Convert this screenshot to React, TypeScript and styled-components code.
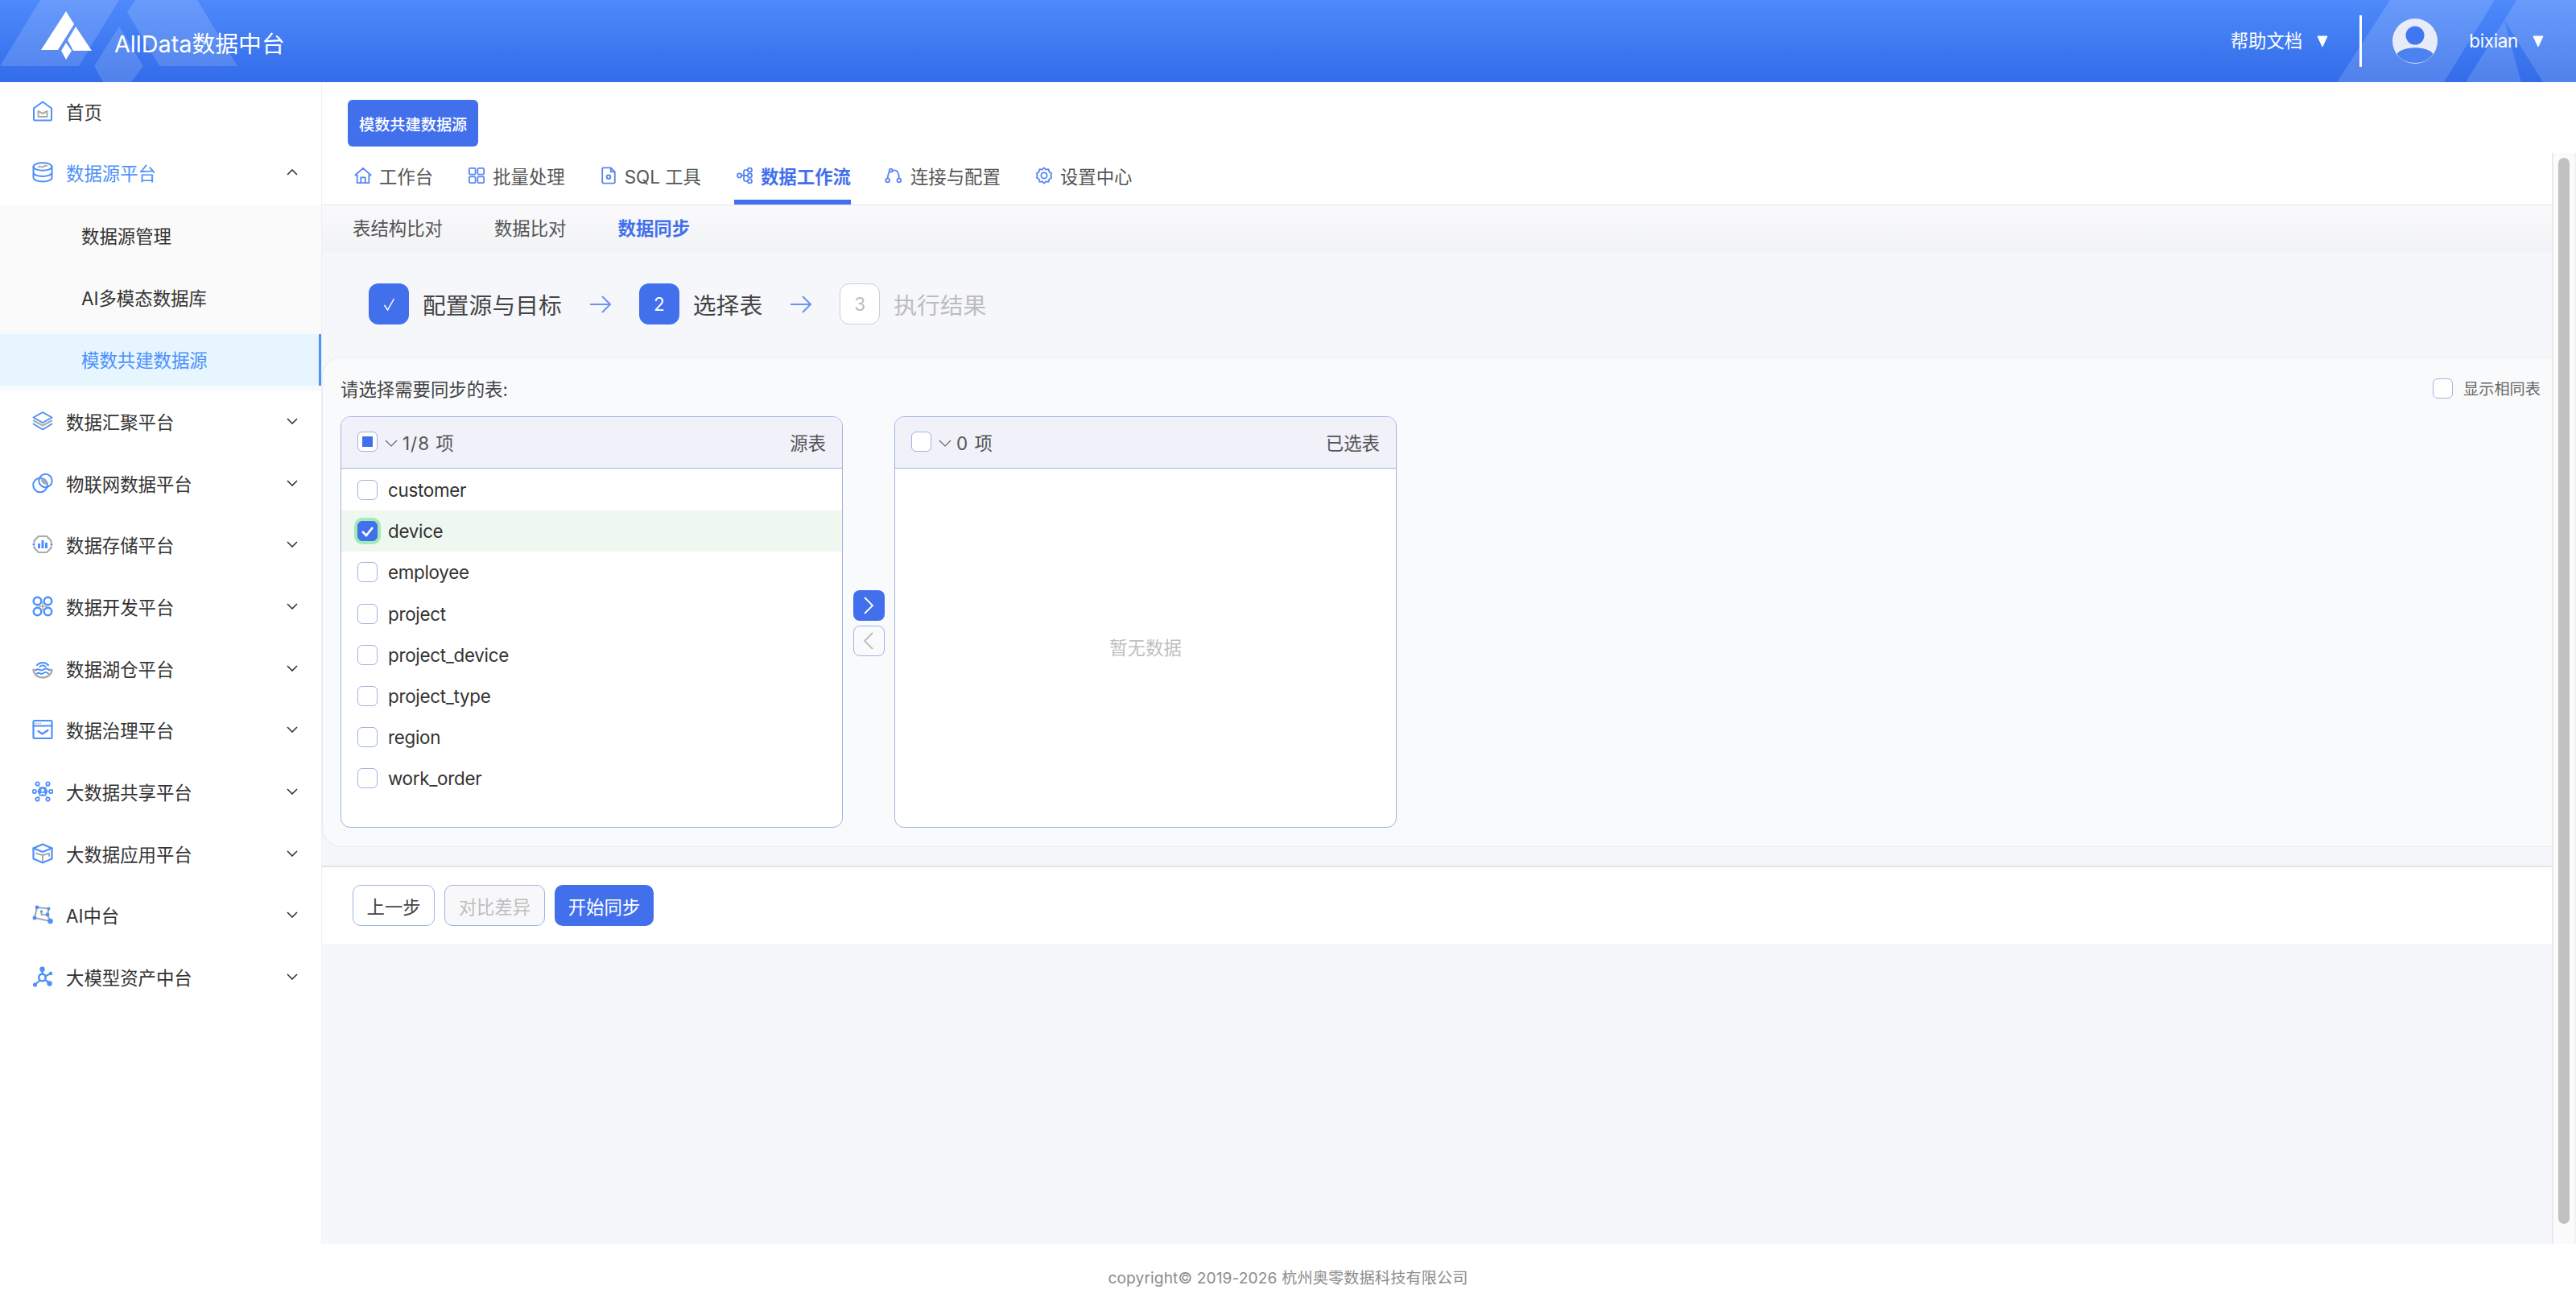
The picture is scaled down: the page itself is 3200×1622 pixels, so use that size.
import React from "react";
import styled, { createGlobalStyle } from "styled-components";

const BLUE = "#4270ed";
const SKY = "#4c90fb";
const GRAY = "#ababab";
const LINE = "#9fb3e1";

const Global = createGlobalStyle`
  html, body { margin: 0; padding: 0; height: 100%; background: #fff; }
  body { font-family: Inter, "Noto Sans CJK SC", sans-serif; color: #333; }
  #root { height: 100%; }
  * { box-sizing: border-box; }
`;

const Page = styled.div`
  height: 100vh;
  display: flex;
  flex-direction: column;
  overflow: hidden;
`;

const TopBar = styled.header`
  position: relative;
  flex: 0 0 102px;
  display: flex;
  align-items: center;
  justify-content: space-between;
  padding: 0 40px 0 0;
  color: #fff;
  background: linear-gradient(180deg, #4e8afb 0%, #326ce9 100%);
  overflow: hidden;
`;
const Deco = styled.svg<{ $side: "left" | "right" }>`
  position: absolute;
  top: 0;
  ${(p) => (p.$side === "left" ? "left: 0;" : "right: 0;")}
  width: 300px;
  height: 102px;
`;
const Brand = styled.div`
  position: relative;
  display: flex;
  align-items: center;
`;
const LogoMark = styled.svg`
  width: 120px;
  height: 102px;
  flex: none;
  margin-right: 22px;
`;
const BrandText = styled.span`
  font-size: 28.8px;
  line-height: 36px;
  margin-top: 7px;
  white-space: nowrap;
`;
const TopRight = styled.div`
  position: relative;
  display: flex;
  align-items: center;
`;
const TopText = styled.span`
  font-size: 22.4px;
  line-height: 30px;
`;
const UserName = styled(TopText)`
  letter-spacing: -0.3px;
`;
const Caret = styled.svg`
  width: 14px;
  height: 15px;
  margin-left: 18px;
`;
const TopDivider = styled.i`
  display: block;
  width: 3px;
  height: 64px;
  background: #fff;
  margin: 0 38px 0 39px;
`;
const Avatar = styled.svg`
  width: 56px;
  height: 56px;
  margin-right: 39px;
`;

const Body = styled.div`
  flex: 1;
  min-height: 0;
  display: flex;
`;
const Side = styled.aside`
  flex: 0 0 400px;
  background: #fff;
  border-right: 1px solid #eef0f4;
  padding-top: 4.8px;
`;
const MenuRow = styled.div<{ $active?: boolean }>`
  height: 64px;
  margin-bottom: 12.7px;
  display: flex;
  align-items: center;
  padding: 0 29px 2px 40px;
  font-size: 22.4px;
  color: ${(p) => (p.$active ? SKY : "#333")};
`;
const MenuIcon = styled.svg`
  width: 26px;
  height: 26px;
  flex: none;
  margin-right: 16px;
`;
const MenuLabel = styled.span`
  flex: 1;
  white-space: nowrap;
`;
const Chevron = styled.svg`
  width: 14px;
  height: 8px;
  flex: none;
`;
const SubMenu = styled.div`
  background: #fafafa;
  margin: -4.7px 0 6px;
  padding: 6.4px 0;
`;
const SubRow = styled.div<{ $active?: boolean }>`
  height: 64px;
  display: flex;
  align-items: center;
  padding: 0 0 3px 101px;
  font-size: 22.4px;
  color: ${(p) => (p.$active ? SKY : "#333")};
  background: ${(p) => (p.$active ? "#e6f5fe" : "transparent")};
  border-right: 3px solid ${(p) => (p.$active ? SKY : "transparent")};
  & + & { margin-top: 12.8px; }
`;

const Main = styled.main`
  flex: 1;
  min-width: 0;
  display: flex;
  flex-direction: column;
  background: #fff;
`;
const TagBar = styled.div`
  flex: 0 0 88px;
  padding: 22px 0 0 32px;
`;
const Tag = styled.div`
  display: inline-flex;
  align-items: center;
  height: 58px;
  padding: 2px 14px 0;
  border-radius: 6px;
  background: ${BLUE};
  color: #fff;
  font-size: 19.2px;
  font-weight: 500;
`;
const Scroll = styled.div`
  flex: 1;
  min-height: 0;
  display: flex;
  overflow: hidden;
`;
const ScrollInner = styled.div`
  flex: 1;
  min-width: 0;
  background: #f5f7fb;
`;
const ScrollRail = styled.div`
  flex: 0 0 30px;
  padding: 6px 6px 25px;
  background: #fbfbfb;
  border-left: 2px solid #e9e9e9;
  border-right: 2px solid #f2f2f2;
  display: flex;
`;
const ScrollThumb = styled.div`
  flex: 1;
  background: #c1c1c1;
  border-radius: 8px;
`;
const Tabs = styled.nav`
  height: 65px;
  display: flex;
  align-items: stretch;
  gap: 43px;
  padding-left: 40px;
  background: #fff;
  border-bottom: 1px solid #e4e5f1;
`;
const Tab = styled.div<{ $active?: boolean }>`
  display: flex;
  align-items: center;
  gap: 9px;
  padding: 3px 0 6px;
  font-size: 22.4px;
  font-weight: ${(p) => (p.$active ? 600 : 400)};
  color: ${(p) => (p.$active ? BLUE : "#555")};
  border-bottom: 6px solid ${(p) => (p.$active ? BLUE : "transparent")};
  white-space: nowrap;
  ${(p) => (p.$active ? "padding-left: 2px; margin: 0 -3px 0 -2px;" : "")}
`;
const TabIcon = styled.svg<{ $wide?: boolean }>`
  width: ${(p) => (p.$wide ? 25 : 22)}px;
  height: 22px;
  flex: none;
`;
const SubTabs = styled.div`
  height: 57px;
  display: flex;
  align-items: center;
  gap: 64px;
  padding: 0 0 3px 38px;
  background: linear-gradient(180deg, #fafafc 0%, #f2f3f6 100%);
`;
const SubTab = styled.span<{ $active?: boolean }>`
  font-size: 22.4px;
  font-weight: ${(p) => (p.$active ? 600 : 400)};
  color: ${(p) => (p.$active ? BLUE : "#555")};
`;
const Stepper = styled.div`
  height: 131px;
  display: flex;
  align-items: center;
  padding-left: 58px;
`;
const StepBox = styled.div<{ $state: "on" | "off" }>`
  width: 50px;
  height: 51px;
  border-radius: 12px;
  display: flex;
  align-items: center;
  justify-content: center;
  font-size: 22.4px;
  margin-right: 17px;
  background: ${(p) => (p.$state === "on" ? BLUE : "#fff")};
  color: ${(p) => (p.$state === "on" ? "#fff" : "#bbb")};
  border: ${(p) => (p.$state === "on" ? "none" : "1px solid #cfcfcf")};
`;
const DoneMark = styled.svg`
  width: 15px;
  height: 16px;
`;
const StepTitle = styled.span<{ $off?: boolean }>`
  font-size: 28.8px;
  color: ${(p) => (p.$off ? "#bdbdbd" : "#444")};
  white-space: nowrap;
`;
const StepArrow = styled.svg`
  width: 28px;
  height: 24px;
  margin: 0 34px 0 34px;
`;
const Card = styled.section`
  height: 609px;
  background: #f9fafc;
  border: 1px solid #e8eaef;
  border-right: none;
  border-radius: 24px 0 0 24px;
  padding: 22px 0 0 22px;
  display: flex;
  flex-direction: column;
`;
const CardHead = styled.div`
  display: flex;
  align-items: center;
  justify-content: space-between;
  height: 32px;
  padding-right: 13px;
  margin-bottom: 19px;
`;
const CardLabel = styled.span`
  font-size: 22.4px;
  color: #444;
`;
const SameOption = styled.label`
  display: flex;
  align-items: center;
  gap: 13px;
  padding-left: 0;
  margin-right: 1px;
  font-size: 19.2px;
  color: #666;
`;
const Transfer = styled.div`
  display: flex;
  align-items: center;
`;
const Panel = styled.div`
  width: 624px;
  height: 511px;
  background: #fff;
  border: 1px solid ${LINE};
  border-radius: 12px;
  overflow: hidden;
  display: flex;
  flex-direction: column;
`;
const PanelHead = styled.div`
  flex: 0 0 64px;
  display: flex;
  align-items: center;
  padding: 0 20px 2px;
  background: #f0f1f9;
  border-bottom: 1px solid ${LINE};
  font-size: 22.4px;
  color: #555;
`;
const HeadChevron = styled.svg`
  width: 16px;
  height: 9px;
  margin: 3px 6px 0 9px;
`;
const PanelCount = styled.span`
  flex: 1;
  letter-spacing: 1px;
`;
const PanelList = styled.div`
  padding-top: 1px;
`;
const Row = styled.div<{ $on?: boolean }>`
  height: 51.2px;
  display: flex;
  align-items: center;
  gap: 13px;
  padding-left: 20px;
  font-size: 22.4px;
  letter-spacing: -0.3px;
  color: #333;
  background: ${(p) => (p.$on ? "#eff8f0" : "transparent")};
`;
const Check = styled.span<{ $on?: boolean; $ring?: boolean }>`
  width: 25px;
  height: 25px;
  flex: none;
  display: flex;
  align-items: center;
  justify-content: center;
  border-radius: 6px;
  border: 1px solid ${(p) => (p.$on ? BLUE : LINE)};
  background: ${(p) => (p.$on ? BLUE : "#fff")};
  ${(p) => (p.$ring ? "box-shadow: 0 0 0 4px #a3ebb5;" : "")}
`;
const Partial = styled.i`
  display: block;
  width: 13px;
  height: 13px;
  background: ${BLUE};
`;
const CheckMark = styled.svg`
  width: 17px;
  height: 14px;
`;
const Empty = styled.div`
  flex: 1;
  display: flex;
  align-items: center;
  justify-content: center;
  padding-bottom: 4px;
  font-size: 22.4px;
  color: #bfbfbf;
`;
const MoveCol = styled.div`
  width: 64px;
  display: flex;
  flex-direction: column;
  align-items: center;
  gap: 6px;
  padding-top: 2px;
`;
const MoveBtn = styled.div<{ $on?: boolean }>`
  width: 39px;
  height: 38px;
  border-radius: 8px;
  display: flex;
  align-items: center;
  justify-content: center;
  background: ${(p) => (p.$on ? BLUE : "#f9fafc")};
  border: ${(p) => (p.$on ? "none" : `1px solid ${LINE}`)};
`;
const MoveIcon = styled.svg`
  width: 14px;
  height: 24px;
`;
const Actions = styled.div`
  margin-top: 23px;
  height: 97px;
  background: #fff;
  border-top: 2px solid #e4e4e4;
  display: flex;
  align-items: center;
  gap: 12px;
  padding-left: 38px;
`;
const Btn = styled.div<{ $kind: "plain" | "off" | "main" }>`
  height: 51px;
  padding: 0 16.5px;
  border-radius: 10px;
  display: flex;
  align-items: center;
  font-size: 22.4px;
  border: ${(p) => (p.$kind === "main" ? "none" : `1px solid ${LINE}`)};
  background: ${(p) => (p.$kind === "main" ? BLUE : p.$kind === "off" ? "#f8f8fb" : "#fff")};
  color: ${(p) => (p.$kind === "main" ? "#fff" : p.$kind === "off" ? "#bdbdbd" : "#444")};
  ${(p) => (p.$kind === "main" ? "padding: 0 17px;" : "")}
`;
const Foot = styled.footer`
  flex: 0 0 77px;
  display: flex;
  align-items: center;
  justify-content: center;
  padding-top: 5px;
  background: #fff;
  font-size: 19.2px;
  letter-spacing: 0.1px;
  color: #8c8c8c;
`;

const s = { fill: "none", stroke: SKY, strokeWidth: 2, strokeLinejoin: "round" as const, strokeLinecap: "round" as const };
const g = { fill: "none", stroke: GRAY, strokeWidth: 2, strokeLinejoin: "round" as const, strokeLinecap: "round" as const };

const icons: Record<string, React.ReactNode> = {
  home: (<>
    <path {...s} d="M13 1.5 L24 9.5 V23 a1.5 1.5 0 0 1 -1.5 1.5 H3.5 A1.5 1.5 0 0 1 2 23 V9.5 Z" />
    <path {...g} d="M7.5 13 V20 H18.5 V13 M7.5 13 L13 16 L18.5 13" />
  </>),
  db: (<>
    <ellipse {...s} cx="13" cy="6" rx="11.5" ry="4.8" />
    <path {...g} d="M8 6.5 C10 4 12 8 14 6 S17 5 18 5" />
    <path {...s} d="M1.5 6 V19.5 C1.5 22.5 6.5 24.5 13 24.5 S24.5 22.5 24.5 19.5 V6 M1.5 13 C1.5 16 6.5 18 13 18 S24.5 16 24.5 13" />
  </>),
  layers: (<>
    <path {...s} d="M13 2 L24.5 8.5 L13 15 L1.5 8.5 Z" />
    <path {...g} strokeWidth="2.4" d="M2 12.5 L13 18.5 L24 12.5" />
    <path {...s} d="M1.5 16.5 L13 23.5 L24.5 16.5" />
  </>),
  overlap: (<>
    <circle {...s} cx="10" cy="15.5" r="8.8" />
    <circle {...s} cx="16.5" cy="10" r="8.2" />
    <path fill={GRAY} d="M11 7.2 C15 7 18.4 10.6 18.2 14.5 C14.5 15.5 10.2 12 11 7.2 Z" />
  </>),
  storage: (<>
    <path {...g} strokeWidth="2.2" d="M8 3 H18 L23.5 8.5 V17.5 L18 23 H8 L2.5 17.5 V8.5 Z" />
    <path fill={SKY} d="M7 12h3v6H7zM11.5 8h3v10h-3zM16 11h3v7h-3z" />
    <path fill="#fff" d="M0 11h5v4H0zM21 11h5v4h-5z" />
    <circle fill={SKY} cx="2" cy="13" r="1.6" /><circle fill={SKY} cx="24" cy="13" r="1.6" />
  </>),
  dev: (<>
    <circle {...s} strokeWidth="2.4" cx="6.5" cy="6.5" r="4.8" />
    <circle {...s} strokeWidth="2.4" cx="19.5" cy="6.5" r="4.8" />
    <circle {...s} strokeWidth="2.4" cx="6.5" cy="19.5" r="4.8" />
    <circle {...s} strokeWidth="2.4" cx="19.5" cy="19.5" r="4.8" />
    <path {...g} strokeWidth="1.6" d="M13 8.5 V17.5 M8.5 13 H17.5" />
  </>),
  lake: (<>
    <path {...s} d="M6 9 A9.5 9.5 0 0 1 20 9 M9.5 11 A5 5 0 0 1 16.5 11" />
    <path {...g} strokeWidth="2.4" d="M1.5 15 H5 M21 15 H24.5 M1.5 15 C2 21 7 24.5 13 24.5 S24 21 24.5 15" />
    <path {...s} d="M5 15 C8 12.5 10 17 13 15 S18 12.5 21 15 M6 19.5 C9 17 10.5 21.5 13 19.5 S17 17 20 19.5" />
  </>),
  gov: (<>
    <rect {...s} strokeWidth="2.2" x="1.5" y="2" width="23" height="22" rx="1.5" />
    <path {...s} strokeWidth="2.2" d="M1.5 8.5 H24.5" />
    <path {...g} strokeWidth="1.4" strokeLinecap="butt" strokeDasharray="1.5 1.2" d="M4 5.2 H11" />
    <path {...s} strokeWidth="2.2" d="M7.5 15 L12.5 18.5 L19.5 14" />
  </>),
  share: (<>
    <path {...g} strokeWidth="1.2" d="M13 13 L6.5 4 M13 13 L19.5 4 M13 13 L6.5 22 M13 13 L19.5 22 M13 13 H3 M13 13 H23" />
    <circle fill={SKY} cx="13" cy="13" r="6" />
    <circle fill="#fff" cx="13" cy="11.5" r="1.9" />
    <path fill="#fff" d="M9.5 16.5 C10 14 16 14 16.5 16.5 Z" />
    {[[6.5, 3.5], [19.5, 3.5], [6.5, 22.5], [19.5, 22.5], [2.8, 13], [23.2, 13]].map(([x, y]) => (
      <circle key={`${x}-${y}`} cx={x} cy={y} r="2.2" fill="#fff" stroke={SKY} strokeWidth="1.8" />
    ))}
  </>),
  cube: (<>
    <path {...s} strokeWidth="2.2" d="M13 1.5 L24.5 6.5 V19.5 L13 24.5 L1.5 19.5 V6.5 Z" />
    <path {...s} strokeWidth="2.2" d="M1.5 6.5 L13 11 L24.5 6.5" />
    <path {...g} d="M5 13 L13 15 L21 13 V16 M13 15 V22" />
  </>),
  ai: (<>
    <path {...g} strokeWidth="2.2" d="M6 4 L20.5 5.5 L19 13.5 L22.5 21 L3 17 Z M11.5 8.5 V13 H19" />
    <circle fill={SKY} cx="6" cy="3.8" r="2.4" /><circle fill={SKY} cx="20.5" cy="5.5" r="2" />
    <circle fill={SKY} cx="19" cy="13" r="2.4" /><circle fill={SKY} cx="11.5" cy="9" r="1.5" />
    <circle fill={SKY} cx="3" cy="17" r="2.5" /><circle fill={SKY} cx="22.5" cy="21" r="3.3" />
  </>),
  model: (<>
    <path {...s} strokeWidth="2.2" d="M12.5 5 V10 M16 12.5 L23 9 M16 17 L21.5 21 M9 18 L4 22.5" />
    <circle {...s} strokeWidth="2.4" cx="12.5" cy="14" r="4.3" />
    <circle fill={SKY} cx="12.5" cy="3.8" r="3.2" /><circle fill={SKY} cx="23" cy="9" r="2.2" />
    <circle fill={SKY} cx="21.5" cy="21.5" r="3.2" /><circle fill={SKY} cx="3.5" cy="23" r="2.6" />
  </>),
};

const t = { fill: "none", stroke: "#5b86f2", strokeWidth: 2, strokeLinejoin: "round" as const, strokeLinecap: "round" as const };
const tabIcons: Record<string, React.ReactNode> = {
  home: (<path {...t} d="M12 2 L22.5 11.5 H20 V22 H4 V11.5 H1.5 Z M9 22 V14.5 H15 V22" />),
  grid: (<><rect {...t} x="2" y="2" width="8.5" height="8.5" rx="1.5" /><rect {...t} x="13.5" y="2" width="8.5" height="8.5" rx="1.5" /><rect {...t} x="2" y="13.5" width="8.5" height="8.5" rx="1.5" /><rect {...t} x="13.5" y="13.5" width="8.5" height="8.5" rx="1.5" /></>),
  doc: (<><path {...t} d="M4.5 1.5 H15 L20.5 7 V21 a1.5 1.5 0 0 1 -1.5 1.5 H5 A1.5 1.5 0 0 1 3.5 21 V3 A1.5 1.5 0 0 1 4.5 1.5 Z M15 1.5 V7 H20.5" /><circle cx="12" cy="14" r="3.6" fill="#5b86f2" /><circle cx="12" cy="14" r="1.4" fill="#fff" /></>),
  flow: (<><circle {...t} cx="5" cy="12" r="2.8" /><circle {...t} cx="19" cy="4.5" r="2.8" /><circle {...t} cx="19" cy="12" r="2.8" /><circle {...t} cx="19" cy="19.5" r="2.8" /><path {...t} d="M7.8 12 H16.2 M11 12 V6 Q11 4.5 12.5 4.5 H16.2 M11 12 V18 Q11 19.5 12.5 19.5 H16.2" /></>),
  link: (<><circle {...t} cx="4.5" cy="18.5" r="2.6" /><circle {...t} cx="20" cy="18.5" r="2.6" /><circle {...t} cx="9" cy="5" r="2.2" /><path {...t} d="M4.5 16 C5 11 6 8 7 6.5 M11 5 H15 C18 5 20 10 20 16" /></>),
  gear: (<><path {...t} d="M12 1.5 L14.5 4 L18 3.5 L19 7 L22 9 L21 12 L22 15 L19 17 L18 20.5 L14.5 20 L12 22.5 L9.5 20 L6 20.5 L5 17 L2 15 L3 12 L2 9 L5 7 L6 3.5 L9.5 4 Z" /><circle {...t} cx="12" cy="12" r="4" /></>),
};

const menus = [
  { k: "layers", l: "数据汇聚平台" }, { k: "overlap", l: "物联网数据平台" }, { k: "storage", l: "数据存储平台" },
  { k: "dev", l: "数据开发平台" }, { k: "lake", l: "数据湖仓平台" }, { k: "gov", l: "数据治理平台" },
  { k: "share", l: "大数据共享平台" }, { k: "cube", l: "大数据应用平台" }, { k: "ai", l: "AI中台" }, { k: "model", l: "大模型资产中台" },
];
const tabs = [
  { k: "home", l: "工作台" }, { k: "grid", l: "批量处理" }, { k: "doc", l: "SQL 工具" },
  { k: "flow", l: "数据工作流", on: true }, { k: "link", l: "连接与配置" }, { k: "gear", l: "设置中心" },
];
const rows = ["customer", "device", "employee", "project", "project_device", "project_type", "region", "work_order"];

const Down = () => (<Chevron viewBox="0 0 14 8"><path d="M1 1 L7 7 L13 1" fill="none" stroke="#333" strokeWidth="1.6" /></Chevron>);
const Up = () => (<Chevron viewBox="0 0 14 8"><path d="M1 7 L7 1 L13 7" fill="none" stroke="#333" strokeWidth="1.6" /></Chevron>);
const Arrow = () => (<StepArrow viewBox="0 0 28 24"><path d="M1 12 H26 M16 2 L26 12 L16 22" fill="none" stroke="#6b93f5" strokeWidth="2" /></StepArrow>);
const CaretIcon = () => (<Caret viewBox="0 0 14 15"><path d="M1 1 H13 L7 14 Z" fill="#fff" stroke="#fff" strokeLinejoin="round" /></Caret>);
const HeadDown = () => (<HeadChevron viewBox="0 0 16 9"><path d="M1 1 L8 8 L15 1" fill="none" stroke="#666" strokeWidth="1.2" /></HeadChevron>);

export default function App() {
  return (
    <Page>
      <Global />
      <TopBar>
        <Deco $side="left" viewBox="0 0 300 102">
          <path fill="rgba(255,255,255,.15)" d="M0 82 L50 0 H148 L98 82 Z M158 15 L168 0 H245 L295 82 H198 Z M117 82 L148 33 L178 82 L163 102 H128 Z" />
        </Deco>
        <Deco $side="right" viewBox="0 0 300 102">
          <path fill="rgba(255,255,255,.15)" d="M3 102 L69 0 H199 L136 102 Z M163 102 L211 25 L232 102 Z M226 0 L211 25 L259 102 H300 V0 Z" />
        </Deco>
        <Brand>
          <LogoMark viewBox="0 0 120 102">
            <path fill="#fff" d="M82 14 L92 30 L72 62 H51 Z M94 33 L114 63 H91 L84 50 Z M82 53 L89 63 L82 74 L76 63 Z" />
          </LogoMark>
          <BrandText>AllData数据中台</BrandText>
        </Brand>
        <TopRight>
          <TopText>帮助文档</TopText>
          <CaretIcon />
          <TopDivider />
          <Avatar viewBox="0 0 56 56">
            <defs><clipPath id="av"><circle cx="28" cy="28" r="28" /></clipPath></defs>
            <circle cx="28" cy="28" r="28" fill="#e8ecf9" />
            <circle cx="28" cy="21" r="11.5" fill="#3f78ee" />
            <path clipPath="url(#av)" fill="#4b82f0" stroke="#e8ecf9" strokeWidth="1" d="M5 44 C12 33 44 33 51 44 C46 52 38 55.5 28 55.5 S10 52 5 44 Z" />
          </Avatar>
          <UserName>bixian</UserName>
          <CaretIcon />
        </TopRight>
      </TopBar>
      <Body>
        <Side>
          <MenuRow><MenuIcon viewBox="0 0 26 26">{icons.home}</MenuIcon><MenuLabel>首页</MenuLabel></MenuRow>
          <MenuRow $active><MenuIcon viewBox="0 0 26 26">{icons.db}</MenuIcon><MenuLabel>数据源平台</MenuLabel><Up /></MenuRow>
          <SubMenu>
            <SubRow>数据源管理</SubRow>
            <SubRow>AI多模态数据库</SubRow>
            <SubRow $active>模数共建数据源</SubRow>
          </SubMenu>
          {menus.map((m) => (
            <MenuRow key={m.l}><MenuIcon viewBox="0 0 26 26">{icons[m.k]}</MenuIcon><MenuLabel>{m.l}</MenuLabel><Down /></MenuRow>
          ))}
        </Side>
        <Main>
          <TagBar><Tag>模数共建数据源</Tag></TagBar>
          <Scroll>
            <ScrollInner>
              <Tabs>
                {tabs.map((x) => (
                  <Tab key={x.l} $active={x.on}><TabIcon $wide={x.k === "link"} viewBox={x.k === "link" ? "-1.5 0 27 24" : "0 0 24 24"}>{tabIcons[x.k]}</TabIcon>{x.l}</Tab>
                ))}
              </Tabs>
              <SubTabs>
                <SubTab>表结构比对</SubTab>
                <SubTab>数据比对</SubTab>
                <SubTab $active>数据同步</SubTab>
              </SubTabs>
              <Stepper>
                <StepBox $state="on"><DoneMark viewBox="0 0 15 16"><path d="M1.5 9 L5.5 15 L13.5 1" fill="none" stroke="#fff" strokeWidth="1.5" /></DoneMark></StepBox>
                <StepTitle>配置源与目标</StepTitle><Arrow />
                <StepBox $state="on">2</StepBox><StepTitle>选择表</StepTitle><Arrow />
                <StepBox $state="off">3</StepBox><StepTitle $off>执行结果</StepTitle>
              </Stepper>
              <Card>
                <CardHead>
                  <CardLabel>请选择需要同步的表:</CardLabel>
                  <SameOption><Check />显示相同表</SameOption>
                </CardHead>
                <Transfer>
                  <Panel>
                    <PanelHead>
                      <Check><Partial /></Check><HeadDown /><PanelCount>1/8 项</PanelCount><span>源表</span>
                    </PanelHead>
                    <PanelList>
                      {rows.map((r) => (
                        <Row key={r} $on={r === "device"}>
                          {r === "device" ? (
                            <Check $on $ring><CheckMark viewBox="0 0 17 14"><path d="M2 7 L7 12 L15 2" fill="none" stroke="#fff" strokeWidth="2.6" /></CheckMark></Check>
                          ) : (<Check />)}
                          {r}
                        </Row>
                      ))}
                    </PanelList>
                  </Panel>
                  <MoveCol>
                    <MoveBtn $on><MoveIcon viewBox="0 0 14 24"><path d="M2 2 L12 12 L2 22" fill="none" stroke="#fff" strokeWidth="1.8" /></MoveIcon></MoveBtn>
                    <MoveBtn><MoveIcon viewBox="0 0 14 24"><path d="M12 2 L2 12 L12 22" fill="none" stroke="#bbb" strokeWidth="1.8" /></MoveIcon></MoveBtn>
                  </MoveCol>
                  <Panel>
                    <PanelHead>
                      <Check /><HeadDown /><PanelCount>0 项</PanelCount><span>已选表</span>
                    </PanelHead>
                    <Empty>暂无数据</Empty>
                  </Panel>
                </Transfer>
              </Card>
              <Actions>
                <Btn $kind="plain">上一步</Btn>
                <Btn $kind="off">对比差异</Btn>
                <Btn $kind="main">开始同步</Btn>
              </Actions>
            </ScrollInner>
            <ScrollRail><ScrollThumb /></ScrollRail>
          </Scroll>
        </Main>
      </Body>
      <Foot>copyright© 2019-2026 杭州奥零数据科技有限公司</Foot>
    </Page>
  );
}
